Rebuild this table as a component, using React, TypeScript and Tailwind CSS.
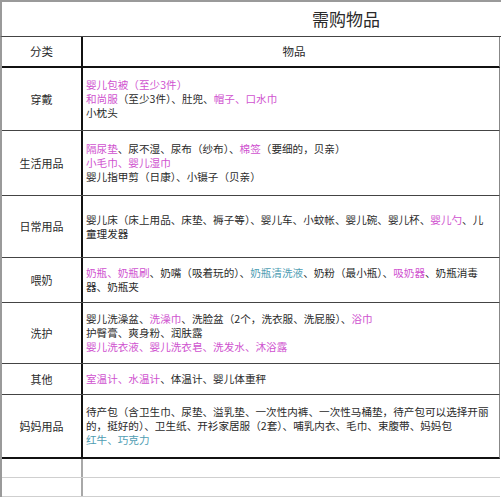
const P = ({ children }: { children: React.ReactNode }) => (
  <span className="text-[#cf52cf]">{children}</span>
)
const T = ({ children }: { children: React.ReactNode }) => (
  <span className="text-[#4e9db3]">{children}</span>
)

type Row = {
  label: string
  h: string
  lines: React.ReactNode[]
  last?: boolean
}

const rows: Row[] = [
  {
    label: "穿戴",
    h: "h-[63px]",
    lines: [
      <P>婴儿包被（至少3件）</P>,
      <>
        <P>和尚服</P>（至少3件）、肚兜、<P>帽子、口水巾</P>
      </>,
      "小枕头",
    ],
  },
  {
    label: "生活用品",
    h: "h-[65px]",
    lines: [
      <>
        <P>隔尿垫</P>、尿不湿、尿布（纱布）、<P>棉签</P>（要细的，贝亲）
      </>,
      <P>小毛巾、婴儿湿巾</P>,
      "婴儿指甲剪（日康）、小镊子（贝亲）",
    ],
  },
  {
    label: "日常用品",
    h: "h-[62px]",
    lines: [
      <>
        婴儿床（床上用品、床垫、褥子等）、婴儿车、小蚊帐、婴儿碗、婴儿杯、<P>婴儿勺</P>、儿
      </>,
      "童理发器",
    ],
  },
  {
    label: "喂奶",
    h: "h-[45px]",
    lines: [
      <>
        <P>奶瓶、奶瓶刷</P>、奶嘴（吸着玩的）、<T>奶瓶清洗液</T>、奶粉（最小瓶）、<P>吸奶器</P>、奶瓶消毒
      </>,
      "器、奶瓶夹",
    ],
  },
  {
    label: "洗护",
    h: "h-[61px]",
    lines: [
      <>
        婴儿洗澡盆、<P>洗澡巾</P>、洗脸盆（2个，洗衣服、洗屁股）、<P>浴巾</P>
      </>,
      "护臀膏、爽身粉、润肤露",
      <P>婴儿洗衣液、婴儿洗衣皂、洗发水、沐浴露</P>,
    ],
  },
  {
    label: "其他",
    h: "h-[31px]",
    lines: [
      <>
        <P>室温计、水温计</P>、体温计、婴儿体重秤
      </>,
    ],
  },
  {
    label: "妈妈用品",
    h: "h-[64px]",
    last: true,
    lines: [
      "待产包（含卫生巾、尿垫、溢乳垫、一次性内裤、一次性马桶垫，待产包可以选择开丽",
      "的，挺好的）、卫生纸、开衫家居服（2套）、哺乳内衣、毛巾、束腹带、妈妈包",
      <T>红牛、巧克力</T>,
    ],
  },
]

export default function App() {
  return (
    <div
      className="w-[501px] h-[500px] overflow-hidden bg-white text-[#2a2a2a]"
      style={{ fontFamily: '"Noto Sans CJK SC", "Noto Sans", sans-serif' }}
    >
      <div className="h-[37px] border-t-2 border-l-2 border-[#9a9a9a] border-b border-b-[#444] flex items-center pl-[310px] text-[17px]">
        需购物品
      </div>
      <div className="w-[500px] border-l-2 border-[#9a9a9a]">
        <div className="flex h-[31px] border-b-2 border-b-[#111] border-r border-r-[#888] text-[11.5px]">
          <div className="w-[81px] shrink-0 border-r-2 border-[#111] flex items-center justify-center">
            分类
          </div>
          <div className="flex-1 flex items-center justify-center pl-[6px]">物品</div>
        </div>
        {rows.map((r) => (
          <div
            key={r.label}
            className={`flex ${r.h} border-r border-r-[#888] ${
              r.last ? "border-b-2 border-b-[#111]" : "border-b border-b-[#444]"
            }`}
          >
            <div className="w-[81px] shrink-0 border-r-2 border-[#111] flex items-center justify-center text-[11px]">
              {r.label}
            </div>
            <div className="flex-1 flex flex-col justify-center pl-[3px] text-[10.6px] leading-[14px] whitespace-nowrap">
              {r.lines.map((l, i) => (
                <div key={i}>{l}</div>
              ))}
            </div>
          </div>
        ))}
        {[0, 1].map((i) => (
          <div key={i} className="flex h-[19px] border-b border-b-[#cfcfcf]">
            <div className="w-[81px] shrink-0 border-r-2 border-[#a8a8a8]" />
            <div className="flex-1" />
          </div>
        ))}
      </div>
    </div>
  )
}
